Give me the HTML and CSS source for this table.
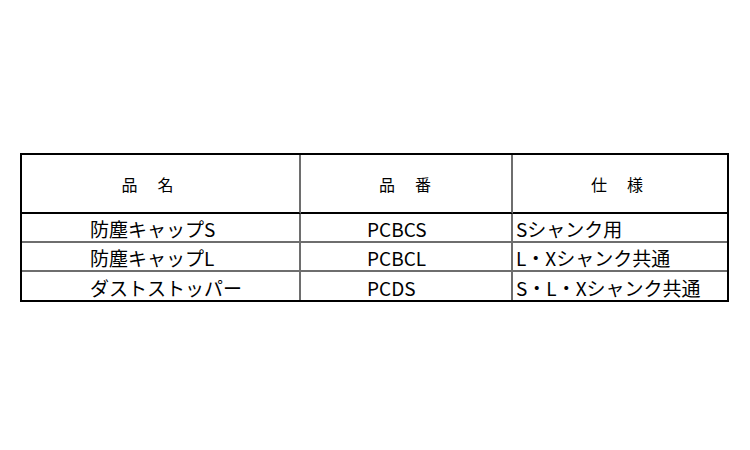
FILE: index.html
```html
<!DOCTYPE html>
<html lang="ja">
<head>
<meta charset="utf-8">
<link rel="stylesheet" href="styles.css">
</head>
<body>
<div class="tbl">
  <div class="cell head c1 h1">品　名</div>
  <div class="cell head c2">品　番</div>
  <div class="cell head c3 h3">仕　様</div>

  <div class="cell row c1 name">防塵キャップS</div>
  <div class="cell row c2 code">PCBCS</div>
  <div class="cell row c3 spec">Sシャンク用</div>

  <div class="cell row c1 name">防塵キャップL</div>
  <div class="cell row c2 code">PCBCL</div>
  <div class="cell row c3 spec">L・Xシャンク共通</div>

  <div class="cell last c1 name">ダストストッパー</div>
  <div class="cell last c2 code">PCDS</div>
  <div class="cell last c3 spec">S・L・Xシャンク共通</div>
</div>
</body>
</html>
```
FILE: styles.css
```css
html, body {
  margin: 0;
  padding: 0;
  background: #fff;
}
body {
  padding: 153px 0 0 20px;
  font-family: "Noto Sans CJK JP", "Noto Sans", sans-serif;
  color: #000;
}
.tbl {
  display: grid;
  grid-template-columns: 279px 212px 214px;
  grid-template-rows: 59px 29px 29px 28px;
  width: 705px;
  border: 2px solid #000;
}
.cell {
  box-sizing: border-box;
  display: flex;
  align-items: center;
  font-size: 19px;
  line-height: 1;
  white-space: nowrap;
}
.c1, .c2 {
  border-right: 2px solid #6e6e6e;
}
.head {
  justify-content: center;
  border-bottom: 2px solid #000;
  font-size: 16px;
  letter-spacing: 2px;
  padding-top: 1px;
}
.h1 { padding-right: 24px; }
.h3 { padding-right: 4px; }
.row {
  border-bottom: 2px solid #6e6e6e;
}
.name { padding-left: 68px; padding-top: 2px; }
.code { padding-left: 66px; padding-top: 2px; }
.spec { padding-left: 3px; padding-top: 2px; }
```
